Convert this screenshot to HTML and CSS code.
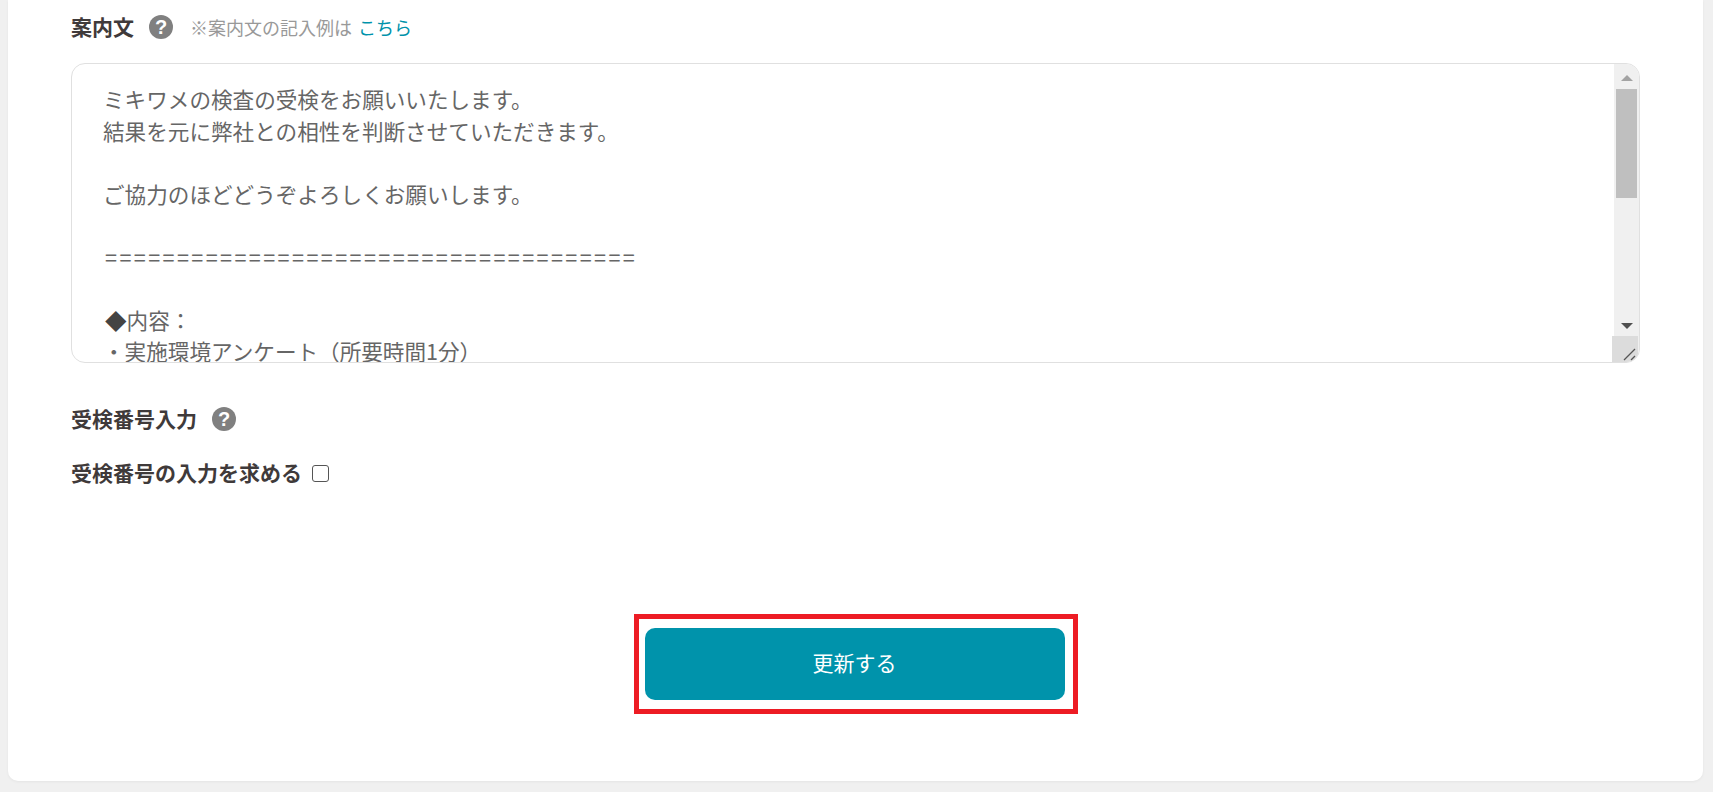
FILE: index.html
```html
<!DOCTYPE html>
<html lang="ja">
<head>
    <meta charset="UTF-8">
    <title>案内文の編集</title>
    <link rel="stylesheet" href="styles.css">
</head>
<body>
    <main class="card">
        <div class="label-row">
            <span class="label">案内文</span>
            <span class="help">?</span>
            <span class="note">※案内文の記入例は</span>
            <a class="note-link" href="#">こちら</a>
        </div>

        <div class="textarea-box">
            <div class="textarea-text">ミキワメの検査の受検をお願いいたします。
結果を元に弊社との相性を判断させていただきます。

ご協力のほどどうぞよろしくお願いします。

<span class="rule-line">=====================================</span>

<span class="content-line"><span class="diamond">◆</span>内容：</span>
・実施環境アンケート（所要時間1分）</div>
            <div class="scrollbar">
                <span class="arrow arrow-up"></span>
                <div class="track"><div class="thumb"></div></div>
                <span class="arrow arrow-down"></span>
                <div class="resizer">
                    <svg width="14" height="14" viewBox="0 0 14 14">
                        <path d="M1 13 L12 2 M8 13 L12 9" stroke="#555" stroke-width="1.3" fill="none"/>
                    </svg>
                </div>
            </div>
        </div>

        <div class="label-row number-row">
            <span class="label">受検番号入力</span>
            <span class="help">?</span>
        </div>

        <label class="check-row">
            <span class="label">受検番号の入力を求める</span>
            <span class="checkbox"></span>
        </label>

        <div class="actions">
            <div class="highlight">
                <button type="button" class="update-btn">更新する</button>
            </div>
        </div>
    </main>
</body>
</html>
```

FILE: styles.css
```css
* {
    margin: 0;
    padding: 0;
    box-sizing: border-box;
}

body {
    font-family: "Noto Sans CJK JP", "Noto Sans", sans-serif;
    background: #f0f0f0;
    color: #3f3a3a;
    height: 792px;
    overflow: hidden;
}

.card {
    margin: 0 10px 0 8px;
    height: 781px;
    padding: 0 63px;
    background: #fff;
    border-radius: 0 0 10px 10px;
    box-shadow: 0 1px 3px rgba(0, 0, 0, 0.05);
}

.label-row {
    display: flex;
    align-items: center;
    height: 54px;
}

.label {
    padding-bottom: 2px;
    font-size: 21px;
    font-weight: 700;
}

.help {
    width: 24px;
    height: 24px;
    margin-left: 15px;
    border-radius: 50%;
    background: #808080;
    color: #fff;
    font-family: "Liberation Sans", sans-serif;
    font-size: 20px;
    font-weight: 700;
    line-height: 24px;
    text-align: center;
}

.note {
    margin-left: 17px;
    font-size: 18px;
    color: #999;
}

.note-link {
    margin-left: 6px;
    font-size: 18px;
    color: #0093ab;
    text-decoration: none;
}

.textarea-box {
    display: flex;
    width: 1569px;
    height: 300px;
    margin-top: 9px;
    border: 1px solid #e0e0e0;
    border-radius: 14px;
    overflow: hidden;
}

.textarea-text {
    flex: 1;
    padding: 19px 30px 0 31px;
    font-size: 21.6px;
    font-weight: 400;
    line-height: 31.5px;
    color: #666;
    white-space: pre-wrap;
    overflow: hidden;
}

.rule-line {
    margin-left: 2px;
    letter-spacing: 2.4px;
}

.content-line {
    margin-left: 2px;
}

.diamond {
    color: #444;
}

.scrollbar {
    position: relative;
    display: flex;
    flex-direction: column;
    width: 25px;
    background: #f0f0f0;
}

.arrow {
    width: 0;
    height: 0;
    margin: 11px auto 0;
    border-left: 6px solid transparent;
    border-right: 6px solid transparent;
}

.arrow-up {
    border-bottom: 6px solid #a3a3a3;
}

.arrow-down {
    margin: 0 auto 33px;
    border-top: 6px solid #505050;
}

.track {
    flex: 1;
    padding: 8px 2px 0;
}

.thumb {
    height: 109px;
    background: #bfbfbf;
}

.resizer {
    position: absolute;
    right: 1px;
    bottom: 0;
    width: 26px;
    height: 26px;
    padding: 11px 0 0 11px;
    background: #dcdcdc;
    line-height: 0;
}

.number-row {
    margin-top: 29px;
}

.check-row {
    display: flex;
    align-items: center;
    height: 54px;
}

.checkbox {
    width: 17px;
    height: 17px;
    margin-left: 10px;
    border: 1.5px solid #555;
    border-radius: 3px;
}

.actions {
    display: flex;
    justify-content: center;
    margin-top: 114px;
}

.highlight {
    width: 444px;
    height: 100px;
    padding: 9px 8px 9px 6px;
    border: 5px solid #ed1c24;
}

.update-btn {
    display: block;
    width: 420px;
    height: 72px;
    padding-bottom: 4px;
    border: none;
    border-radius: 10px;
    background: #0093ab;
    color: #fff;
    font-family: inherit;
    font-size: 21px;
    cursor: pointer;
}
```
